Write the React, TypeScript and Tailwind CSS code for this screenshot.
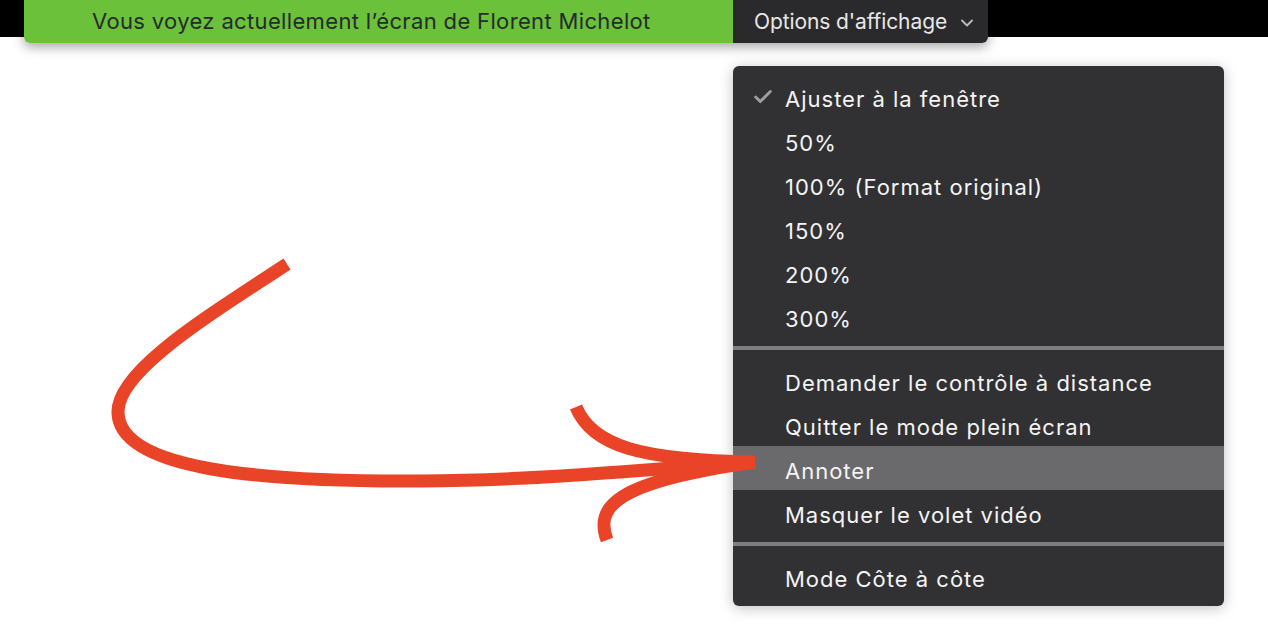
import { Check, ChevronDown } from "lucide-react";

const zoomItems = ["Ajuster à la fenêtre", "50%", "100% (Format original)", "150%", "200%", "300%"];
const actionItems = ["Demander le contrôle à distance", "Quitter le mode plein écran", "Annoter", "Masquer le volet vidéo"];

function MenuRow({ label, checked, active }: { label: string; checked?: boolean; active?: boolean }) {
  return (
    <div
      className={`flex h-[44px] items-center pt-[6px] text-[22px] tracking-[1px] text-[#f4f4f4] ${
        active ? "bg-[#6a6a6c]" : ""
      }`}
    >
      <span className="flex w-[52px] shrink-0 justify-center pl-[8px] pb-[4px]">
        {checked ? <Check className="h-[22px] w-[22px] text-[#9d9d9f]" strokeWidth={3.2} /> : null}
      </span>
      {label}
    </div>
  );
}

function Separator() {
  return <div className="my-[8px] h-[4px] bg-[#7e7e80]" />;
}

export default function App() {
  return (
    <div className="relative h-[642px] w-[1268px] overflow-hidden bg-white font-['Inter',sans-serif]">
      {/* black strip of the shared screen with the sharing toolbar hanging over it */}
      <div className="bg-[linear-gradient(to_bottom,#000_37px,#fff_37px)] pl-[24px]">
        <div className="flex h-[43px] w-fit rounded-b-[6px] shadow-[0_4px_12px_rgba(0,0,0,0.35)]">
          <div className="flex w-[709px] items-center rounded-bl-[6px] bg-[#6bc13a] pl-[68px] text-[22px] tracking-[0.35px] text-[#262a30]">
            Vous voyez actuellement l’écran de Florent Michelot
          </div>
          <div className="flex w-[255px] items-center gap-[10px] rounded-br-[6px] bg-[#2a2a2c] pl-[21px] text-[21px] tracking-[-0.1px] text-[#e8e8e8]">
            Options d'affichage
            <ChevronDown className="mt-[2px] h-[20px] w-[20px] text-[#b9b9bb]" strokeWidth={2.3} />
          </div>
        </div>
      </div>

      {/* dropdown */}
      <div className="absolute left-[733px] top-[66px] w-[491px] overflow-hidden rounded-[6px] bg-[#313133] py-[8px] shadow-[0_2px_14px_rgba(0,0,0,0.25)]">
        {zoomItems.map((item, i) => (
          <MenuRow key={item} label={item} checked={i === 0} />
        ))}
        <Separator />
        {actionItems.map((item) => (
          <MenuRow key={item} label={item} active={item === "Annoter"} />
        ))}
        <Separator />
        <MenuRow label="Mode Côte à côte" />
      </div>

      {/* red annotation arrow drawn on the shared screen */}
      <svg className="absolute left-0 top-0" width="1268" height="642" viewBox="0 0 1268 642" fill="none">
        <g stroke="#e94328" strokeWidth="13">
          <path d="M287 264 C205 318 116 372 118 413 C120 470 262 482 420 481 C560 480 680 466 755 462" />
          <path d="M576 407 C592 446 640 460 755 462" />
          <path d="M607 540 C595 508 612 482 755 462" />
        </g>
      </svg>
    </div>
  );
}
